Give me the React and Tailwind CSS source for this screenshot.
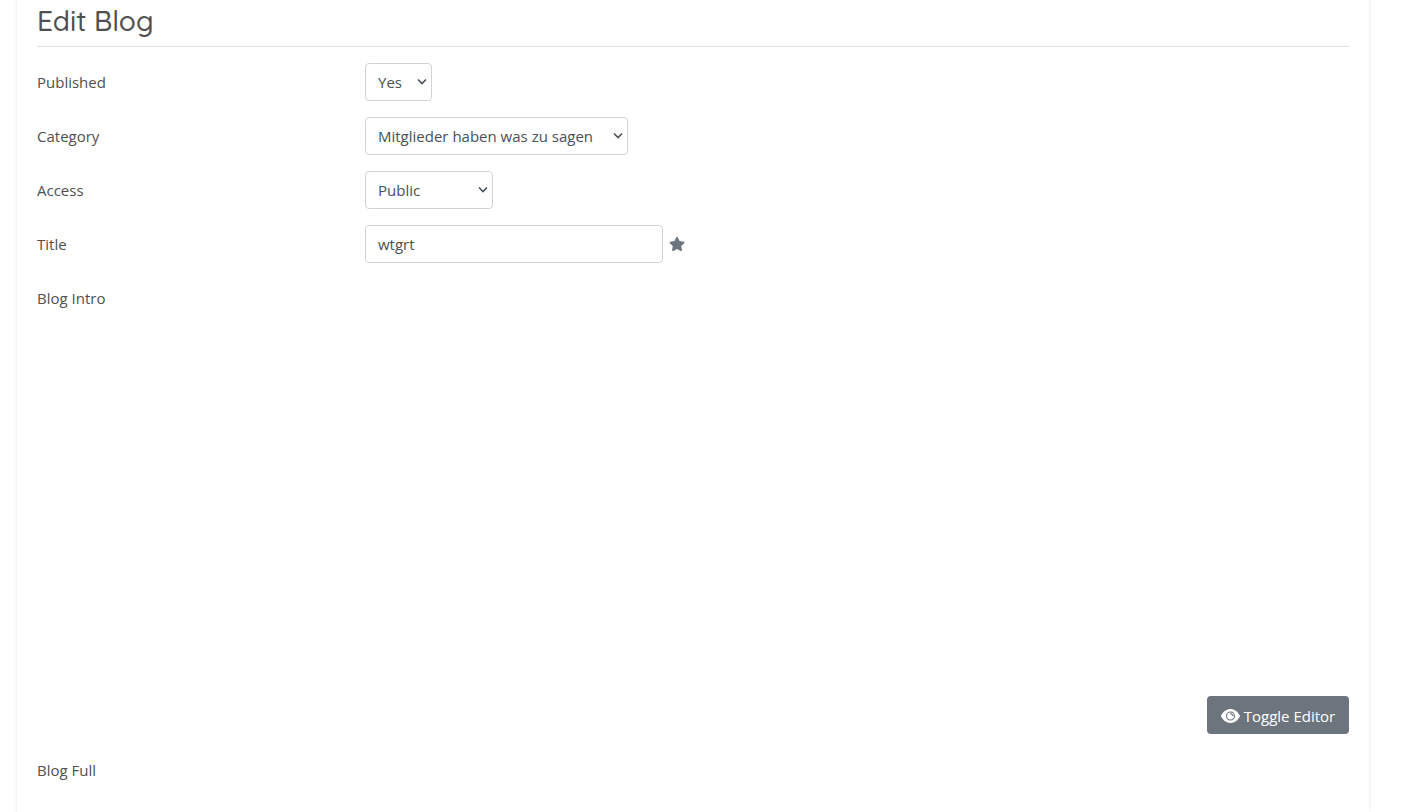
import { useState } from 'react';
import { FaStar } from 'react-icons/fa';

const ACCESS_LEVELS = ['Public', 'Registered', 'Special'];

const controlClass =
  'h-[38px] rounded-sm border border-[#ced4da] bg-white text-[15px] leading-6 text-[#495057] focus:outline-none focus:border-[#80bdff]';

function EyeIcon() {
  return (
    <svg viewBox="0 0 19 14" className="h-3.5 w-[19px]" aria-hidden="true">
      <path
        d="M.3 6.2C2.3 2.4 5.7 0 9.5 0s7.2 2.4 9.2 6.2a1.6 1.6 0 0 1 0 1.6C16.700 11.600 13.300 14 9.500 14S2.300 11.600.300 7.800a1.600 1.600 0 0 1 0-1.600z"
        fill="currentColor"
      />
      <circle cx="9.5" cy="7" r="4" fill="none" stroke="#6c757d" strokeWidth="1.1" />
      <path d="M9.300 4.600a2.500 2.500 0 0 1 2.500 2.500" fill="none" stroke="#6c757d" strokeWidth="1.2" />
    </svg>
  );
}

// Label on the left quarter, control on the right
function FormRow({ label, htmlFor, children }) {
  return (
    <div className="mb-4 grid min-h-[38px] grid-cols-[1fr_3fr] items-start">
      <label htmlFor={htmlFor} className="pt-[7px] leading-6">
        {label}
      </label>
      <div className="flex items-center">{children}</div>
    </div>
  );
}

function SelectField({ id, options, value, onChange, className }) {
  return (
    <div className={`relative ${className}`}>
      <select
        id={id}
        value={value}
        onChange={(e) => onChange(e.target.value)}
        className={`w-full appearance-none pr-6 pl-3 ${controlClass}`}
      >
        {options.map((option) => (
          <option key={option}>{option}</option>
        ))}
      </select>
      <svg
        viewBox="0 0 10 8"
        className="pointer-events-none absolute top-[15px] right-[5px] h-2 w-2.5"
        fill="none"
        stroke="#495057"
        strokeWidth="1.6"
        aria-hidden="true"
      >
        <path d="M1 1.5 5 5.5 9 1.5" />
      </svg>
    </div>
  );
}

function App() {
  const [published, setPublished] = useState('Yes');
  const [category, setCategory] = useState('Mitglieder haben was zu sagen');
  const [access, setAccess] = useState('Public');
  const [title, setTitle] = useState('wtgrt');

  return (
    <div className="min-h-screen bg-[#fefefe] pr-[51px] pl-[17px] font-['Open_Sans','Noto_Sans',sans-serif] text-[15px] text-[#505050]">
      <main className="min-h-screen bg-white px-5 shadow-[0_0_3px_rgba(0,0,0,0.1)]">
        <h1 className="mb-4 border-b border-[#dee2e6] pt-1 pb-2 font-['Quicksand','Lato',sans-serif] text-[28px] leading-[34px] font-medium text-[#505050]">
          Edit Blog
        </h1>

        <form onSubmit={(e) => e.preventDefault()}>
          <FormRow label="Published" htmlFor="published">
            <SelectField
              id="published"
              options={['Yes', 'No']}
              value={published}
              onChange={setPublished}
              className="w-[67px]"
            />
          </FormRow>

          <FormRow label="Category" htmlFor="category">
            <SelectField
              id="category"
              options={['Mitglieder haben was zu sagen']}
              value={category}
              onChange={setCategory}
              className="w-[263px]"
            />
          </FormRow>

          <FormRow label="Access" htmlFor="access">
            <SelectField
              id="access"
              options={ACCESS_LEVELS}
              value={access}
              onChange={setAccess}
              className="w-32"
            />
          </FormRow>

          <FormRow label="Title" htmlFor="title">
            <input
              id="title"
              type="text"
              value={title}
              onChange={(e) => setTitle(e.target.value)}
              className={`w-[298px] px-3 ${controlClass}`}
            />
            <FaStar size={16} className="ml-1.5 text-[#6c757d]" aria-label="Required" />
          </FormRow>

          {/* Editor area */}
          <section className="mb-4 flex min-h-[455px] flex-col justify-between">
            <h2 className="pt-[7px] leading-6">Blog Intro</h2>
            <div className="flex justify-end">
              <button
                type="button"
                className="flex h-[38px] min-w-[142px] items-center justify-center gap-1 rounded-sm bg-[#6c757d] px-3 pt-0.5 leading-6 text-white hover:bg-[#5a6268]"
              >
                <EyeIcon />
                Toggle Editor
              </button>
            </div>
          </section>

          <h2 className="pt-2 leading-6">Blog Full</h2>
        </form>
      </main>
    </div>
  );
}

export default App;
